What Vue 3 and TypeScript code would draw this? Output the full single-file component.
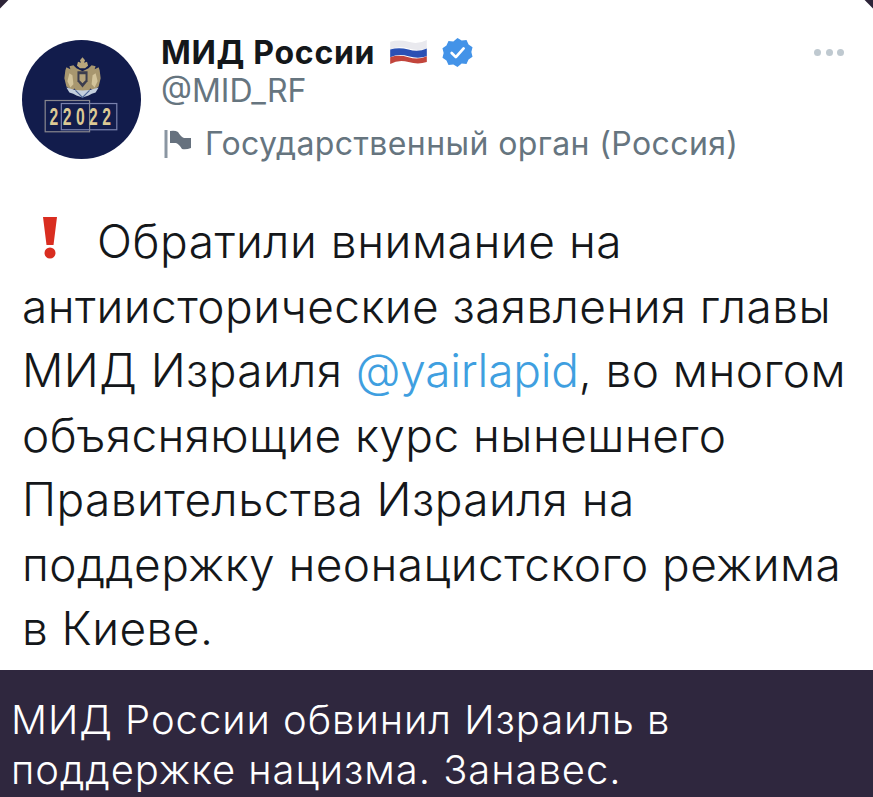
<script setup lang="ts">
const lines: string[] = [
  'антиисторические заявления главы',
  'объясняющие курс нынешнего',
  'Правительства Израиля на',
  'поддержку неонацистского режима',
  'в Киеве.',
]
</script>

<template>
  <div class="page">
    <section class="tweet">
      <header class="head">
        <svg class="avatar" viewBox="0 0 118 118" aria-hidden="true">
          <circle cx="59" cy="59" r="59" fill="#121c4c" />
          <path d="M60 17l2.500 3-1 2.500 3-1 1 4-3 2.500h-5l-3-2.500 1-4 3 1-1-2.500z" fill="#b9a67c" />
          <path d="M54 28l-3-3-4 1 1 3-4-2-1 3-1 8 2 8 5 4 3-2 3 4 5 2 5-2 3-4 3 2 5-4 2-8-1-8-1-3-4 2 1-3-4-1-3 3-6 3z" fill="#a8976f" />
          <path d="M47 33l3 2 1 9-3 3-3-6zM73 33l-3 2-1 9 3 3 3-6z" fill="#d3c49b" />
          <path d="M55 31h10v10l-5 6-5-6z" fill="#3b3d4e" />
          <path d="M57 34h6v6l-3 3-3-3z" fill="#b5a47c" />
          <path d="M44 47q16 6 32 0l-3 5q-4 1-7 3l-6 2-6-2q-3-2-7-3z" fill="#c4cfdd" />
          <path d="M53 50l7 7 7-7" fill="none" stroke="#4e6696" stroke-width="1.200" />
          <rect x="23" y="60" width="44" height="31" fill="none" stroke="#87868e" stroke-width="1.200" />
          <rect x="39" y="63" width="55" height="26" fill="none" stroke="#7a82ad" stroke-width="1.200" />
          <g transform="translate(60 84.500) scale(.74 1.100)">
            <text class="digits" text-anchor="middle">22022</text>
          </g>
        </svg>
        <div class="meta">
          <div class="name-row">
            <span class="name">МИД России</span>
            <svg class="flag" viewBox="0 0 40 28" aria-hidden="true">
              <path d="M1 4q9-3 19 0t19-2v9q-9 3-19 0t-19 1z" fill="#e9e9ee" />
              <path d="M1 12q9-3 19 0t19-1v8q-9 3-19 0t-19 1z" fill="#2a50b4" />
              <path d="M1 20q9-3 19 0t19-1v6q-9 3-19 0t-19 2z" fill="#c2453c" />
            </svg>
            <svg class="badge" viewBox="0 0 32 32" aria-hidden="true">
              <path d="M16 1l4.300 2.600 5-.4 2.100 4.500 4.100 2.900-1.200 4.900 1.200 4.900-4.100 2.900-2.100 4.500-5-.4L16 31l-4.300-2.600-5 .4-2.100-4.500-4.100-2.900 1.200-4.900-1.200-4.900 4.100-2.900 2.100-4.500 5 .4z" fill="#4393e8" />
              <path d="M10 16.500l4.300 4.300 8-9" fill="none" stroke="#fff" stroke-width="2.800" stroke-linecap="round" stroke-linejoin="round" />
            </svg>
          </div>
          <div class="handle">@MID_RF</div>
          <div class="label">
            <svg class="label-flag" viewBox="0 0 28 28" aria-hidden="true">
              <path d="M2 0v28" stroke="#8a96a2" stroke-width="3" fill="none" />
              <path d="M6 1q5-1 8 1 3 5 6 6h7v10q-5 2-9 1-3-5-6-6H6z" fill="#66717e" />
            </svg>
            <span>Государственный орган (Россия)</span>
          </div>
        </div>
        <div class="more" aria-hidden="true"><i></i><i></i><i></i></div>
      </header>

      <div class="body">
        <p class="line first">
          <svg class="bang" viewBox="0 0 14 42" aria-hidden="true">
            <path d="M0 0h14l-3.500 28h-7z" fill="#d92d20" />
            <circle cx="7" cy="36" r="5.500" fill="#d92d20" />
          </svg>
          <span>Обратили внимание на</span>
        </p>
        <p class="line">{{ lines[0] }}</p>
        <p class="line">МИД Израиля <span class="mention">@yairlapid</span>, во многом</p>
        <p v-for="l in lines.slice(1)" :key="l" class="line">{{ l }}</p>
      </div>
      <span class="corner left"></span>
      <span class="corner right"></span>
    </section>

    <footer class="caption">
      <p>МИД России обвинил Израиль в</p>
      <p>поддержке нацизма. Занавес.</p>
    </footer>
  </div>
</template>

<style scoped>
.page {
  width: 873px;
  height: 797px;
  display: flex;
  flex-direction: column;
  overflow: hidden;
  font-family: Inter, "Noto Sans", sans-serif;
}
.tweet {
  position: relative;
  height: 670px;
  background: #fff;
  padding: 36px 0 0 22px;
  box-sizing: border-box;
  overflow: hidden;
}
.head {
  display: flex;
  align-items: flex-start;
}
.avatar {
  width: 119px;
  height: 119px;
  margin-top: 4px;
  flex: none;
}
.digits {
  font-family: "Liberation Sans", sans-serif;
  font-size: 21px;
  font-weight: 700;
  letter-spacing: 6px;
  fill: #dcc994;
}
.meta {
  margin-left: 20px;
  display: flex;
  flex-direction: column;
  flex: 1;
}
.name-row {
  display: flex;
  align-items: center;
  height: 32px;
}
.name {
  font-size: 32px;
  font-weight: 700;
  color: #14171a;
  letter-spacing: 0.700px;
}
.flag {
  width: 39px;
  height: 27px;
  margin-left: 14px;
  margin-top: -2px;
}
.badge {
  width: 31px;
  height: 31px;
  margin-left: 14px;
}
.handle {
  margin-top: 8px;
  font-size: 32px;
  line-height: 30px;
  color: #66757f;
}
.label {
  margin-top: 22px;
  display: flex;
  align-items: center;
  font-size: 32px;
  line-height: 32px;
  color: #66757f;
  letter-spacing: 0.4px;
}
.label-flag {
  width: 28px;
  height: 28px;
  margin-left: 3px;
  margin-right: 13px;
}
.more {
  position: absolute;
  top: 49px;
  right: 29px;
  display: flex;
  gap: 4.500px;
}
.more i {
  width: 7px;
  height: 7px;
  border-radius: 50%;
  background: #bfc9d0;
}
.body {
  margin-top: 49px;
  color: #14171a;
  font-size: 46px;
  font-weight: 300;
  line-height: 64.500px;
}
.line {
  margin: 0;
  white-space: nowrap;
  height: 64.500px;
  letter-spacing: 0.450px;
}
.first {
  display: flex;
  align-items: center;
}
.bang {
  width: 14px;
  height: 42px;
  margin: 0 40px 6px 21px;
}
.first span {
  letter-spacing: 0.550px;
}
.mention {
  color: #3f9fe0;
  letter-spacing: -0.2px;
}
.corner {
  position: absolute;
  top: -18px;
  width: 26px;
  height: 26px;
  background: #2d2438;
  transform: rotate(45deg);
}
.left {
  left: -18px;
}
.right {
  right: -18px;
}
.caption {
  flex: 1;
  background: #2f273e;
  color: #fff;
  padding: 25px 0 0 11px;
  font-size: 40px;
  font-weight: 300;
  line-height: 50px;
  letter-spacing: 0.950px;
}
.caption p {
  margin: 0;
  white-space: nowrap;
}
</style>
